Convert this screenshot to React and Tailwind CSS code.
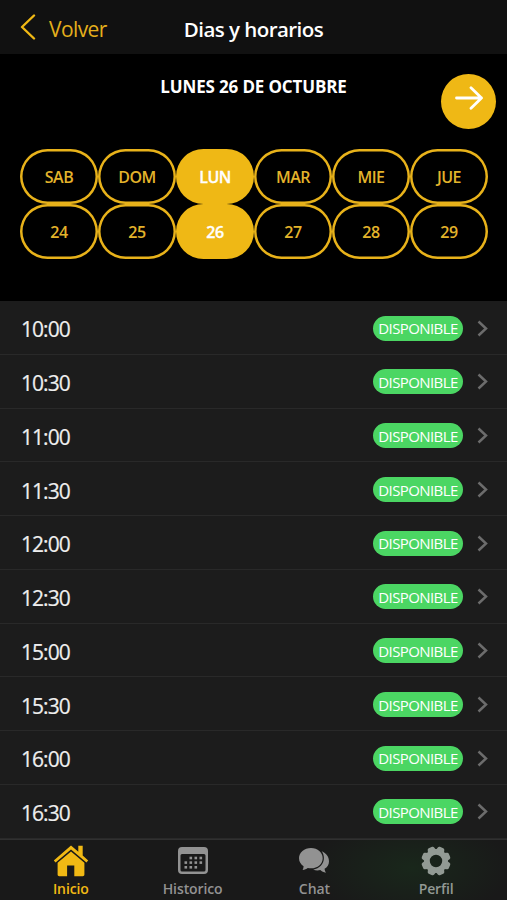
const DAYS = [
    {name: 'SAB', date: '24'},
    {name: 'DOM', date: '25'},
    {name: 'LUN', date: '26', active: true},
    {name: 'MAR', date: '27'},
    {name: 'MIE', date: '28'},
    {name: 'JUE', date: '29'},
]

const HOURS = ['10:00', '10:30', '11:00', '11:30', '12:00', '12:30', '15:00', '15:30', '16:00', '16:30']

function HomeIcon() {
    return (
        <svg width="36" height="32" viewBox="0 0 36 32" fill="currentColor">
            <path d="M18 .5.8 15.400l1.800 2.200L18 4.600l15.400 13 1.800-2.200-5.500-4.800V.8h-4.400v6z" />
            <path d="M18 6.600 4.600 17.800v11.700c0 1 .7 1.700 1.700 1.700h7.800V20.400h7.200v10.800h8.400c1 0 1.700-.7 1.700-1.700V17.800z" />
        </svg>
    )
}

function CalendarIcon() {
    return (
        <svg width="30" height="27" viewBox="0 0 30 27" fill="currentColor">
            <path fillRule="evenodd" d="M4 0h22a4 4 0 0 1 4 4v19a4 4 0 0 1-4 4H4a4 4 0 0 1-4-4V4a4 4 0 0 1 4-4zm0 7a1.500 1.500 0 0 0-1.500 1.500V23A1.500 1.500 0 0 0 4 24.500h22a1.500 1.500 0 0 0 1.500-1.500V8.500A1.500 1.500 0 0 0 26 7z" />
            {[11.5, 16.5, 21.5].map((x) => <rect key={x} x={x} y="9.700" width="2.600" height="2.600" />)}
            {[6.5, 11.5, 16.5, 21.5].map((x) => <rect key={x} x={x} y="14.300" width="2.600" height="2.600" />)}
            {[6.5, 11.5, 16.5].map((x) => <rect key={x} x={x} y="19" width="2.600" height="2.600" />)}
        </svg>
    )
}

function ChatIcon() {
    return (
        <svg width="30" height="25" viewBox="0 0 30 25" fill="currentColor">
            <path d="M12 0C5.300 0 0 4.500 0 10.300c0 3.400 1.800 6.100 4.600 7.900-.1 1.500-.4 2.600-1 3.800 2.100-.2 3.800-1 5.200-2 1.100.2 2.100.3 3.200.3 6.700 0 11.700-4.300 11.700-10.100S18.700 0 12 0z" />
            <path d="M22.700 3.300c1.500 2 2.200 4.200 2.200 6.800 0 5.900-4.500 10.600-10.700 11.700 2.300.7 4.900.9 7.100.3 1.500 1.300 3.200 2.200 5.700 2.600-.9-1.300-1.300-2.500-1.400-3.900 2.700-1.700 4.400-4.200 4.400-7.600 0-4.500-2.900-8.200-7.300-9.900z" />
        </svg>
    )
}

function GearIcon() {
    return (
        <svg width="30" height="30" viewBox="0 0 30 30">
            <g fill="currentColor">
                {[22.5, 67.5, 112.5, 157.5, 202.5, 247.5, 292.5, 337.5].map((angle) => (
                    <path key={angle} d="M10.400 5.500 11.500 1.800Q11.800.4 13.200.4h3.600q1.400 0 1.700 1.400l1.100 3.700z" transform={`rotate(${angle} 15 15)`} />
                ))}
            </g>
            <circle cx="15" cy="15" r="9.100" fill="none" stroke="currentColor" strokeWidth="5.800" />
        </svg>
    )
}

const TABS = [
    {label: 'Inicio', icon: <HomeIcon />, color: 'text-[#f1b914]'},
    {label: 'Historico', icon: <CalendarIcon />, color: 'text-[#929292]'},
    {label: 'Chat', icon: <ChatIcon />, color: 'text-[#929292]'},
    {label: 'Perfil', icon: <GearIcon />, color: 'text-[#929a94]'},
]

function Pill({children, active}) {
    return (
        <div className={`flex h-[55px] items-center justify-center rounded-[28px] pt-px text-base font-semibold tracking-[-0.5px] ${active ? 'bg-[#efb815] text-white [-webkit-text-stroke:0.3px]' : 'text-[#e3b32b] shadow-[inset_0_0_0_2.500px_#e8b21a]'}`}>
            {children}
        </div>
    )
}

function Header() {
    return (
        <header className="grid h-[54px] grid-cols-3 items-center bg-[#111111] pt-[5px]">
            <div className="flex items-center gap-[13px] pl-5 text-[#e4af1c]">
                <svg className="-mt-1.5" width="16" height="26" viewBox="0 0 16 26" fill="none" stroke="#f1b914" strokeWidth="2.400" strokeLinecap="round" strokeLinejoin="round">
                    <path d="M14 1.500 2 13l12 11.500" />
                </svg>
                <span className="text-[21px] tracking-[-0.6px]">Volver</span>
            </div>
            <h1 className="text-center text-[20.500px] font-semibold tracking-[-0.55px] whitespace-nowrap">Dias y horarios</h1>
        </header>
    )
}

function DayPicker() {
    return (
        <section className="relative h-[247px] bg-black pt-[95px]">
            <h2 className="absolute inset-x-0 top-[21px] text-center text-[17px] leading-6 font-bold tracking-[-0.15px]">LUNES 26 DE OCTUBRE</h2>
            <button className="absolute top-[20px] right-[11px] flex size-[55px] items-center justify-center rounded-full bg-[#efb815] pb-[7px]">
                <svg width="28" height="24" viewBox="0 0 28 24" fill="none" stroke="white" strokeWidth="2.800" strokeLinecap="round" strokeLinejoin="round">
                    <path d="M1.500 12h25M16 1.800 26.500 12 16 22.200" />
                </svg>
            </button>
            <div className="ml-5 grid w-[468px] grid-cols-6">
                {DAYS.map((day) => (
                    <div key={day.date}>
                        <Pill active={day.active}>{day.name}</Pill>
                        <Pill active={day.active}>{day.date}</Pill>
                    </div>
                ))}
            </div>
        </section>
    )
}

function HourRow({hour}) {
    return (
        <li className="flex h-[53.75px] items-center border-b border-[#292929] pt-[1.500px] pr-[19px] pl-[21px]">
            <span className="pt-1 text-[21px] tracking-[-0.95px] text-[#eeeeee] [-webkit-text-stroke:0.2px]">{hour}</span>
            <span className="ml-auto flex h-[25px] w-[90px] items-center justify-center rounded-full bg-[#4bd663] pt-px text-[15px] tracking-[-0.6px] text-white">DISPONIBLE</span>
            <svg className="ml-[14px]" width="11" height="17" viewBox="0 0 11 17" fill="none" stroke="#6c6c6c" strokeWidth="2.500">
                <path d="M1.500 1.500 9 8.500l-7.500 7" />
            </svg>
        </li>
    )
}

export default function App() {
    return (
        <main className="flex h-[900px] w-[507px] flex-col overflow-hidden bg-[#1c1c1c] font-['Open_Sans',sans-serif] text-white">
            <Header />
            <DayPicker />
            <ul>
                {HOURS.map((hour) => <HourRow key={hour} hour={hour} />)}
            </ul>
            <nav className="grid flex-1 grid-cols-4 border-t border-[#303030] bg-[#191919] bg-[radial-gradient(ellipse_100px_50px_at_412px_28px,#19271b,#191919)] px-[10px]">
                {TABS.map((tab) => (
                    <div key={tab.label} className={`flex flex-col items-center ${tab.color}`}>
                        <div className="flex h-[39px] items-center pt-[3px]">{tab.icon}</div>
                        <span className="text-sm leading-5 font-semibold tracking-[-0.1px]">{tab.label}</span>
                    </div>
                ))}
            </nav>
        </main>
    )
}
